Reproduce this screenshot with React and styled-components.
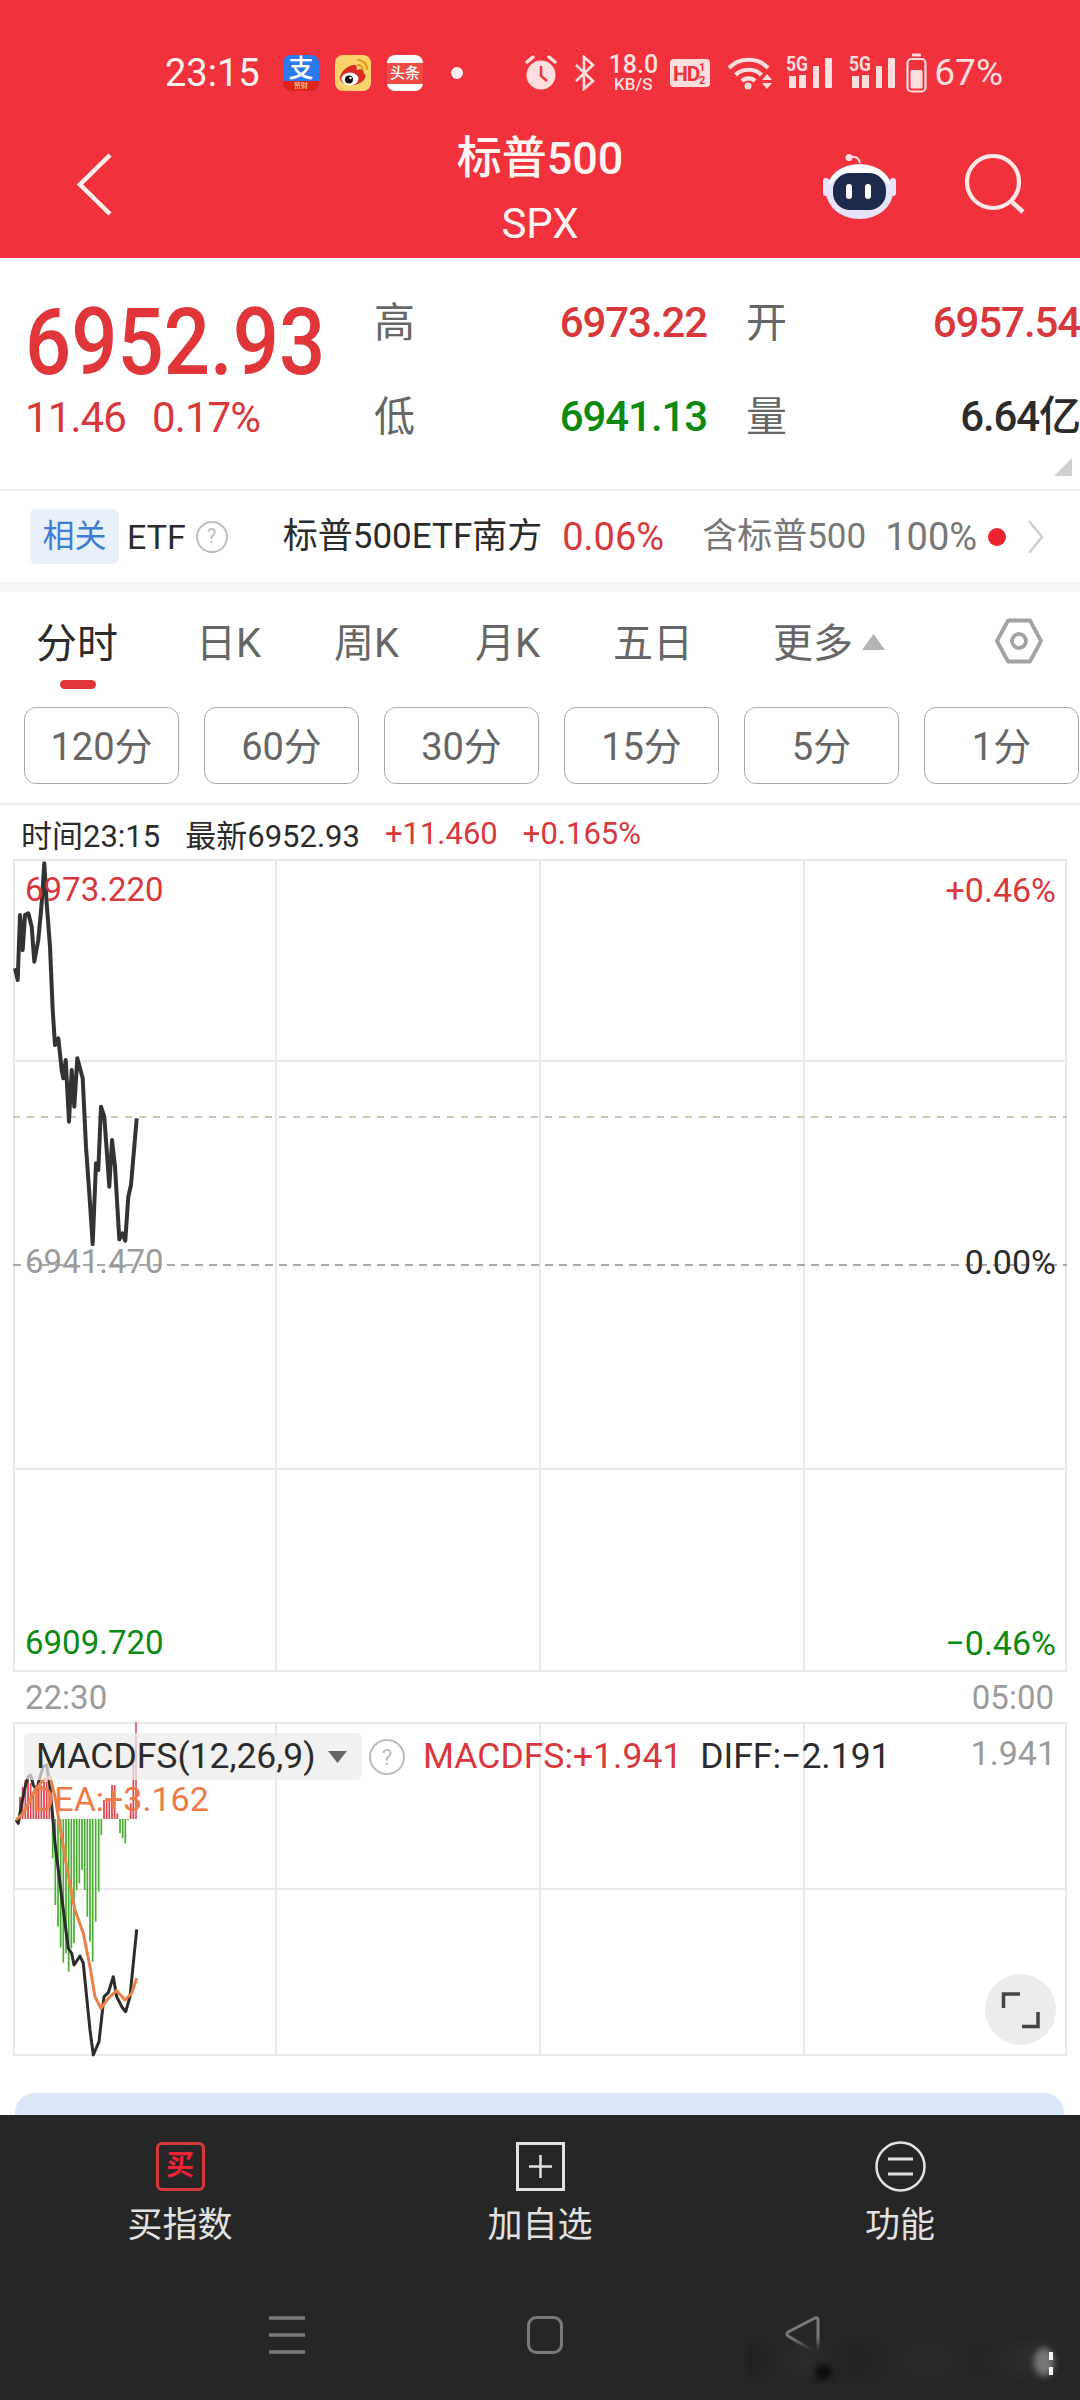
import React from "react";
import styled, { createGlobalStyle } from "styled-components";

const RED = "#d8373c";
const GREEN = "#0b8a12";
const DARK = "#2b2b2b";
const GRAY = "#666666";
const MUTED = "#9b9b9b";
const PALE = "#fddede";
const LINE = "#e9e9e9";

const Global = createGlobalStyle`
  html, body { margin: 0; padding: 0; background: #fff; }
  body { font-family: Roboto, "Noto Sans CJK SC", sans-serif; }
  * { box-sizing: border-box; }
`;

const Page = styled.div`
  width: 1080px; height: 2400px; overflow: hidden;
  display: flex; flex-direction: column; background: #fff;
`;
const Header = styled.header`
  height: 258px; flex: none; background: #f1323c; display: flex; flex-direction: column;
`;
const StatusBar = styled.div`
  height: 132px; padding: 53px 77px 0 165px; display: flex; align-items: flex-start;
`;
const StatusRow = styled.div`
  height: 40px; width: 100%; display: flex; align-items: center;
`;
const Clock = styled.span`
  font-size: 38px; line-height: 40px; color: #fff3f0; width: 118px; flex: none;
`;
const AppIcon = styled.span`
  width: 36px; height: 36px; border-radius: 8px; flex: none; margin-right: 16px;
  position: relative; overflow: hidden; display: flex; align-items: center; justify-content: center;
  background: ${p => p.$bg};
`;
const AlipayGlyph = styled.span`
  color: #fff; font-size: 25px; line-height: 26px; margin-top: -8px; font-weight: 500;
`;
const AlipayBand = styled.span`
  position: absolute; left: 0; right: 0; bottom: 0; height: 10px; background: #e2231a;
  color: #ffe9b0; font-size: 7px; line-height: 10px; text-align: center;
`;
const ToutiaoBand = styled.span`
  width: 100%; height: 21px; background: #ef4b43; color: #fff; font-size: 15px; line-height: 21px;
  text-align: center; font-weight: 500; letter-spacing: 0; white-space: nowrap;
`;
const NoticeDot = styled.span`
  width: 12px; height: 12px; border-radius: 50%; background: #fff0ee; margin-left: 12px; flex: none;
`;
const StatusRight = styled.div`
  margin-left: auto; display: flex; align-items: center; height: 40px;
`;
const Slot = styled.span`
  display: flex; flex: none; margin-left: ${p => p.$ml || 0}px;
`;
const Speed = styled.span`
  display: flex; flex-direction: column; align-items: center; width: 46px; color: ${PALE}; margin-left: 15px; font-weight: 500;
`;
const SpeedValue = styled.span`font-size: 25px; line-height: 22px;`;
const SpeedUnit = styled.span`font-size: 17px; line-height: 17px;`;
const Battery = styled.span`
  font-size: 37px; line-height: 40px; color: ${PALE}; margin-left: 7px;
`;
const NavBar = styled.div`
  flex: 1; display: grid; grid-template-columns: 353px 220px 1fr; padding: 0 55px 0 77px; align-items: start;
`;
const TitleBlock = styled.div`
  display: flex; flex-direction: column; align-items: center; color: #fff5f2;
`;
const Title = styled.div`font-size: 45px; line-height: 54px; font-weight: 500;`;
const Subtitle = styled.div`font-size: 42px; line-height: 48px; margin-top: 14px;`;
const BackSlot = styled.div`padding-top: 21px; display: flex;`;
const NavRight = styled.div`display: flex; justify-content: flex-end; gap: 69px; padding-top: 22px; align-items: flex-start;`;

const Quote = styled.section`
  position: relative; flex: none; height: 233px; display: flex; border-bottom: 2px solid #efefef;
`;
const PriceCol = styled.div`
  width: 374px; padding: 0 0 0 25px; flex: none;
`;
const BigPrice = styled.div`
  font-size: 92px; line-height: 92px; margin-top: 39px; color: #e0363a; font-weight: 500;
  transform: scaleX(.885); transform-origin: left center; white-space: nowrap;
`;
const PriceDelta = styled.div`
  display: flex; gap: 26px; margin-top: 4px; color: ${RED}; font-size: 42px; line-height: 50px; letter-spacing: -.9px;
`;
const Stats = styled.div`
  flex: 1; display: grid; grid-template-columns: 60px 273px 39px 60px 274px; grid-auto-rows: 94px; padding-top: 18px;
`;
const StatLabel = styled.div`
  font-size: 41px; line-height: 94px; color: ${GRAY};
`;
const StatValue = styled.div`
  font-size: 42px; line-height: 94px; text-align: right; letter-spacing: -1.1px; color: ${p => p.$c}; white-space: nowrap;
  font-weight: 500;
`;
const StatGap = styled.div``;
const CornerMark = styled.span`
  position: absolute; right: 8px; bottom: 13px; width: 18px; height: 18px; background: #cfcfcf;
  clip-path: polygon(100% 0, 100% 100%, 0 100%);
`;

const EtfRow = styled.section`
  flex: none; height: 91px; display: flex; align-items: center; padding-left: 30px; white-space: nowrap;
`;
const EtfBadge = styled.span`
  width: 89px; height: 55px; border-radius: 6px; background: #e8f0fb; color: #3e7dd4; font-size: 32px; line-height: 55px; text-align: center; flex: none;
`;
const EtfText = styled.span`
  color: ${p => p.$c || DARK}; margin-left: ${p => p.$ml}px; flex: none; line-height: 40px;
  font-size: ${p => p.$size || 34}px;
`;
const Help = styled.span`
  width: ${p => p.$s}px; height: ${p => p.$s}px; border-radius: 50%; border: 2px solid #bdbdbd; color: #bdbdbd;
  font-size: ${p => p.$s * .62}px; line-height: ${p => p.$s - 4}px; text-align: center; flex: none; margin-left: ${p => p.$ml}px;
`;
const RedDot = styled.span`
  width: 18px; height: 18px; border-radius: 50%; background: #ec2330; margin-left: 11px; flex: none;
`;
const Band = styled.div`height: 10px; flex: none; background: #f5f5f5;`;

const Tabs = styled.nav`
  flex: none; height: 115px; padding: 27px 0 0 36px; display: grid; grid-template-columns: 160px 138px 141px 138px 160px 222px 48px; align-items: start;
`;
const Tab = styled.div`
  display: flex; flex-direction: column; align-items: flex-start;
`;
const TabLabel = styled.div`
  font-size: ${p => p.$on ? 41 : 40}px; line-height: 50px; color: ${p => p.$on ? DARK : GRAY}; display: flex; align-items: center; gap: 9px;
`;
const TabBar = styled.span`
  width: 36px; height: 9px; border-radius: 5px; background: #e0363a; margin: 11px 0 0 24px;
`;
const TabCaret = styled.span`
  width: 23px; height: 16px; background: #b4b4b4; clip-path: polygon(50% 0, 100% 100%, 0 100%); margin-top: -4px;
`;
const HexSlot = styled.div`display: flex; margin-top: -1px;`;
const PeriodRow = styled.div`
  flex: none; display: flex; gap: 25px; padding-left: 24px; height: 77px;
`;
const Period = styled.div`
  flex: none; width: 155px; height: 77px; border: 1px solid #a9a9a9; border-radius: 12px; color: ${GRAY};
  font-size: 38px; line-height: 78px; text-align: center;
`;
const InfoLine = styled.div`
  flex: none; margin-top: 19px; height: 56px; border-top: 2px solid #efefef; padding: 2px 0 0 21px;
  display: flex; gap: 25px; align-items: center; font-size: 31px; white-space: nowrap;
`;
const InfoItem = styled.span`color: ${p => p.$c || DARK};`;

const Chart = styled.div`
  position: relative; flex: none; margin: 0 13px; height: ${p => p.$h}px;
  svg { display: block; overflow: visible; }
`;
const ChartLabel = styled.span`
  position: absolute; top: ${p => p.$top}px; ${p => p.$right ? "right: 11px; font-size: 34px;" : "left: 12px; font-size: 33px;"}
  color: ${p => p.$c}; line-height: 38px; white-space: nowrap;
`;
const AxisRow = styled.div`
  flex: none; height: 50px; padding: 7px 26px 0 25px; display: flex; justify-content: space-between;
  color: ${MUTED}; font-size: 33px; line-height: 38px;
`;
const Legend = styled.div`
  position: absolute; left: 11px; top: 11px; display: flex; align-items: center; font-size: 35.500px; line-height: 47px; white-space: nowrap;
`;
const LegendBox = styled.div`
  width: 338px; height: 47px; border-radius: 6px; background: rgba(236,236,236,.72); color: ${DARK};
  padding-left: 12px; display: flex; align-items: center; position: relative;
`;
const LegendCaret = styled.span`
  position: absolute; left: 304px; top: 18px; width: 19px; height: 12px; background: #666;
  clip-path: polygon(0 0, 100% 0, 50% 100%);
`;
const LegendValue = styled.span`color: ${p => p.$c}; margin-left: ${p => p.$ml}px;`;
const DeaLabel = styled.span`
  position: absolute; left: 19px; top: 58px; color: #ee7b47; font-size: 34px; line-height: 38px;
`;
const ExpandButton = styled.div`
  position: absolute; right: 11px; bottom: 11px; width: 71px; height: 71px; border-radius: 50%; background: #ececec;
  display: flex; align-items: center; justify-content: center;
`;
const Promo = styled.div`
  flex: none; margin: 37px 16px 0 15px; height: 40px; background: #d9e7f9; border-radius: 20px 20px 0 0;
`;
const Main = styled.main`
  flex: 1; min-height: 0; overflow: hidden; display: flex; flex-direction: column;
`;
const BottomBar = styled.footer`
  position: relative; flex: none; height: 285px; background: #262626; display: flex; flex-direction: column;
`;
const Actions = styled.div`
  flex: none; height: 201px; display: grid; grid-template-columns: repeat(3, 360px); padding-top: 25px;
`;
const Action = styled.div`
  display: flex; flex-direction: column; align-items: center; color: #e2e2e2; font-size: 35px; line-height: 42px;
`;
const ActionIcon = styled.span`
  height: 52px; margin-bottom: 13px; display: flex; align-items: center; justify-content: center;
`;
const BuyIcon = styled.span`
  width: 49px; height: 49px; border: 3px solid #d8373c; border-radius: 6px; color: #ee2335; font-size: 28px; line-height: 42px; text-align: center; font-weight: 700;
`;
const SystemNav = styled.div`
  flex: none; display: grid; grid-template-columns: repeat(3, 258px); padding-left: 158px; justify-items: center;
`;
const Smudge = styled.div`
  position: absolute; left: 748px; top: 229px; width: 300px; height: 32px;
  background: linear-gradient(90deg, #1f1f1f 0%, #2b2b2b 18%, #212121 36%, #2a2a2a 60%, #242424 78%, #303030 100%);
  filter: blur(4px);
`;
const SmudgeSpot = styled.div`
  position: absolute; left: 815px; top: 250px; width: 17px; height: 15px; border-radius: 50%; background: #0b0b0b; filter: blur(3px);
`;
const SmudgeGlow = styled.div`
  position: absolute; left: 1034px; top: 233px; width: 20px; height: 28px; border-radius: 50%; background: #777; filter: blur(3px);
`;
const SmudgeEdge = styled.div`
  position: absolute; left: 1048px; top: 237px; width: 5px; height: 23px; border-right: 4px dashed #f4f4f4;
`;

const P = (arr, x0, y0) => arr.map(([x, y]) => `${(x0 + x / 3).toFixed(1)},${(y0 + y / 3).toFixed(1)}`).join(" ");

const mainLine = [[45,445],[53,480],[60,285],[68,390],[75,285],[85,280],[95,320],[103,425],[115,360],[125,250],[133,130],[140,250],[150,380],[158,570],[165,675],[175,655],[185,750],[190,775],[197,720],[207,905],[215,750],[223,860],[232,715],[248,775],[258,980],[268,1120],[278,1272],[288,1030],[295,1050],[303,860],[313,890],[328,1100],[336,960],[345,1040],[358,1258],[367,1240],[376,1262],[385,1130],[393,1095],[410,895]];
const macdBlack = [[48,450],[55,460],[65,400],[78,340],[85,320],[92,315],[100,345],[110,360],[120,320],[130,290],[140,285],[150,350],[158,440],[165,520],[180,640],[195,760],[205,835],[215,850],[222,885],[240,858],[250,880],[262,1000],[270,1080],[280,1155],[297,1115],[312,980],[325,968],[340,920],[350,980],[365,1010],[377,1025],[390,980],[400,880],[410,778]];
const macdOrange = [[48,450],[70,430],[90,390],[105,360],[130,330],[150,320],[165,380],[180,470],[200,590],[225,720],[250,790],[270,890],[285,980],[303,1015],[325,985],[350,962],[375,990],[395,970],[410,925]];
const greenBars = [[158,565],[166,705],[174,770],[182,832],[190,878],[198,850],[206,905],[214,835],[222,820],[230,660],[238,640],[246,600],[254,660],[262,740],[270,815],[278,875],[287,755],[296,665],[304,495],[360,490],[368,505],[376,520],[384,450]];
const redBars = [[60,380],[68,350],[76,330],[84,330],[92,340],[100,375],[108,390],[116,345],[124,345],[132,335],[140,335],[148,335],[156,405],[312,390],[320,385],[328,390],[336,345],[344,345],[352,430],[392,400],[400,270]];

const VGRID = [276, 540, 804];

const MainChart = () => (
  <svg width="1054" height="813" viewBox="13 859 1054 813">
    <g stroke={LINE} strokeWidth="2" fill="none">
      <rect x="14" y="860" width="1052" height="811" />
      {VGRID.map(x => <line key={x} x1={x} x2={x} y1="859" y2="1672" />)}
      <line x1="13" x2="1067" y1="1061" y2="1061" />
      <line x1="13" x2="1067" y1="1469" y2="1469" />
    </g>
    <line x1="13" x2="1067" y1="1117" y2="1117" stroke="#c9b48f" strokeWidth="1.500" strokeDasharray="7 7" />
    <line x1="13" x2="1067" y1="1265" y2="1265" stroke="#a9a9a9" strokeWidth="2" strokeDasharray="8 6" />
    <polyline points={P(mainLine, 0, 820)} fill="none" stroke="#333" strokeWidth="4" strokeLinejoin="round" />
  </svg>
);

const MacdChart = () => (
  <svg width="1054" height="334" viewBox="13 1722 1054 334">
    <g stroke={LINE} strokeWidth="2" fill="none">
      <rect x="14" y="1723" width="1052" height="332" />
      {VGRID.map(x => <line key={x} x1={x} x2={x} y1="1722" y2="2056" />)}
      <line x1="13" x2="1067" y1="1889" y2="1889" />
    </g>
    <g stroke="#dc4a56" strokeWidth="1.800">
      {redBars.map(([x, y]) => <line key={x} x1={x / 3} x2={x / 3} y1={1670 + y / 3} y2="1819" />)}
    </g>
    <g stroke="#48ad30" strokeWidth="1.700">
      {greenBars.map(([x, y]) => <line key={x} x1={x / 3} x2={x / 3} y1="1819" y2={1670 + y / 3} />)}
    </g>
    <line x1="136" x2="136" y1="1722" y2="1819" stroke="#d9737b" strokeWidth="2" />
    <polyline points={P(macdBlack, 0, 1670)} fill="none" stroke="#2c2c2c" strokeWidth="3" strokeLinejoin="round" />
    <polyline points={P(macdOrange, 0, 1670)} fill="none" stroke="#e8824a" strokeWidth="3" strokeLinejoin="round" />
  </svg>
);

const WeiboIcon = () => (
  <svg width="36" height="36" viewBox="0 0 36 36">
    <path d="M5 23c0-6 8-13 14-13 3 0 3 2 2.500 5 4-1.500 8-1 7 3 2 1 3 3 1 6-3 4-8 6-13 6-6 0-11.500-2.500-11.500-7z" fill="#d92c24" />
    <ellipse cx="15" cy="24" rx="8.500" ry="6.500" fill="#fff" />
    <circle cx="14" cy="24.500" r="4" fill="#111" />
    <circle cx="15.500" cy="23" r="1.200" fill="#fff" />
    <path d="M23 5c5 0 9 4 9 9M23 10c2.500 0 4.500 2 4.500 4.500" fill="none" stroke="#e49a18" strokeWidth="2.200" strokeLinecap="round" />
  </svg>
);

const Alarm = () => (
  <svg width="32" height="36" viewBox="0 0 32 36">
    <circle cx="16" cy="20" r="14.500" fill={PALE} />
    <path d="M16 11v10l6 5" fill="none" stroke="#f1323c" strokeWidth="2.500" />
    <path d="M2 7l6-5M30 7l-6-5" stroke={PALE} strokeWidth="3.500" strokeLinecap="round" />
  </svg>
);
const BluetoothIcon = () => (
  <svg width="21" height="36" viewBox="0 0 21 36">
    <path d="M2 10l17 16-9 8V2l9 8L2 26" fill="none" stroke={PALE} strokeWidth="2.600" />
  </svg>
);
const HdIcon = () => (
  <svg width="40" height="28" viewBox="0 0 40 28">
    <rect width="40" height="28" rx="4" fill={PALE} />
    <text x="3" y="22" fontFamily="Roboto, sans-serif" fontWeight="700" fontSize="21" letterSpacing="-1" fill="#f1323c">HD</text>
    <text x="29" y="12" fontFamily="Roboto, sans-serif" fontWeight="700" fontSize="11" fill="#f1323c">1</text>
    <text x="29" y="25" fontFamily="Roboto, sans-serif" fontWeight="700" fontSize="11" fill="#f1323c">2</text>
  </svg>
);
const WifiIcon = () => (
  <svg width="45" height="34" viewBox="0 0 45 34">
    <path d="M1 12C11 1 30 1 40 12M7.500 19C14 12 27 12 33.500 19M14 25c3.500-3.500 9.500-3.500 13 0" fill="none" stroke={PALE} strokeWidth="4.200" />
    <circle cx="20" cy="30" r="3.500" fill={PALE} />
    <path d="M39 18l5 6H34zM39 33l5-6H34z" fill={PALE} />
  </svg>
);
const SignalIcon = () => (
  <svg width="46" height="42" viewBox="0 -4 46 42">
    <text x="0" y="15" fontFamily="Roboto, sans-serif" fontWeight="700" fontSize="21" textLength="22" lengthAdjust="spacingAndGlyphs" fill={PALE}>5G</text>
    <g fill={PALE}>
      <rect x="3" y="20" width="7" height="12" />
      <rect x="13" y="19" width="7" height="13" />
      <rect x="27" y="10" width="6" height="22" rx="1" />
      <rect x="39" y="2" width="7" height="30" rx="1" />
    </g>
  </svg>
);
const BatteryIcon = () => (
  <svg width="21" height="40" viewBox="0 0 21 40">
    <rect x="1.500" y="6" width="18" height="32.500" rx="4" fill="none" stroke={PALE} strokeWidth="2.200" />
    <rect x="6" y="0.500" width="9" height="3" rx="1" fill={PALE} />
    <rect x="4.500" y="17" width="12" height="18.500" rx="1.500" fill={PALE} />
  </svg>
);
const BackIcon = () => (
  <svg width="35" height="63" viewBox="0 0 35 63">
    <path d="M33 2L3 31.500 33 61" fill="none" stroke="#fff0ee" strokeWidth="4.500" />
  </svg>
);
const RobotIcon = () => (
  <svg width="73" height="66" viewBox="0 0 73 66">
    <circle cx="26" cy="3.500" r="3.500" fill="#f3dfe6" />
    <path d="M27 3c5-1 9 1 10 6" fill="none" stroke="#f3dfe6" strokeWidth="2.200" />
    <rect x="0" y="24" width="6" height="18" rx="3" fill="#e8e3f7" />
    <rect x="67" y="24" width="6" height="18" rx="3" fill="#e8e3f7" />
    <ellipse cx="36.500" cy="37.500" rx="33.500" ry="27.500" fill="#e6e4fa" />
    <path d="M5 32C9 17 22 11 36.500 11S64 17 68 32C60 19 13 19 5 32z" fill="#ffffff" />
    <rect x="10" y="19" width="53" height="37" rx="17" fill="#1d2a4b" />
    <rect x="23" y="30" width="6" height="15" rx="3" fill="#fff" />
    <rect x="42" y="30" width="6" height="15" rx="3" fill="#fff" />
  </svg>
);
const SearchIcon = () => (
  <svg width="60" height="60" viewBox="0 0 60 60">
    <circle cx="28" cy="28" r="26" fill="none" stroke="#ffe9e6" strokeWidth="4.200" />
    <path d="M47 48l11 10" fill="none" stroke="#ffe9e6" strokeWidth="4.500" />
  </svg>
);
const Chevron = () => (
  <svg width="17" height="34" viewBox="0 0 17 34" style={{ marginLeft: 21, flex: "none" }}>
    <path d="M2 1l13 16L2 33" fill="none" stroke="#cfcfcf" strokeWidth="2.500" />
  </svg>
);
const HexIcon = () => (
  <svg width="48" height="46" viewBox="0 0 48 46">
    <path d="M13 2.500h22L46 23 35 43.500H13L2 23z" fill="none" stroke="#a3a3a3" strokeWidth="3.800" strokeLinejoin="round" />
    <circle cx="24" cy="23" r="7" fill="none" stroke="#a3a3a3" strokeWidth="3.800" />
  </svg>
);
const ExpandIcon = () => (
  <svg width="38" height="36" viewBox="0 0 38 36">
    <path d="M1.500 16V2H18M36 20v14.500H20" fill="none" stroke="#444" strokeWidth="3.500" />
  </svg>
);
const PlusBox = () => (
  <svg width="49" height="49" viewBox="0 0 49 49">
    <rect x="1.500" y="1.500" width="46" height="46" fill="none" stroke="#e2e2e2" strokeWidth="3" />
    <path d="M24.500 13v23M13 24.500h23" stroke="#e2e2e2" strokeWidth="2.500" />
  </svg>
);
const MenuCircle = () => (
  <svg width="51" height="51" viewBox="0 0 51 51">
    <circle cx="25.500" cy="25.500" r="24" fill="none" stroke="#e2e2e2" strokeWidth="2.500" />
    <path d="M13 18h25M13 33h25" stroke="#e2e2e2" strokeWidth="3" />
  </svg>
);
const NavLines = () => (
  <svg width="36" height="38" viewBox="0 0 36 38">
    <path d="M0 2h36M0 19h36M0 36h36" stroke="#7a7a7a" strokeWidth="3.500" />
  </svg>
);
const NavHome = () => (
  <svg width="36" height="38" viewBox="0 0 36 38">
    <rect x="1.500" y="1.500" width="33" height="35" rx="8" fill="none" stroke="#7a7a7a" strokeWidth="3" />
  </svg>
);
const NavBack = () => (
  <svg width="36" height="38" viewBox="0 0 36 38">
    <path d="M33 4q0-3-3-2L3 16q-2 2 0 4l30 18z" fill="none" stroke="#7a7a7a" strokeWidth="3" strokeLinejoin="round" />
  </svg>
);

const periods = ["120分", "60分", "30分", "15分", "5分", "1分"];
const tabs = ["日K", "周K", "月K", "五日"];

export default function App() {
  return (
    <Page>
      <Global />
      <Main>
        <Header>
          <StatusBar>
            <StatusRow>
              <Clock>23:15</Clock>
              <AppIcon $bg="#2b7bee">
                <AlipayGlyph>支</AlipayGlyph>
                <AlipayBand>赞财</AlipayBand>
              </AppIcon>
              <AppIcon $bg="#fbd36b"><WeiboIcon /></AppIcon>
              <AppIcon $bg="#ffffff"><ToutiaoBand>头条</ToutiaoBand></AppIcon>
              <NoticeDot />
              <StatusRight>
                <Slot><Alarm /></Slot>
                <Slot $ml={17}><BluetoothIcon /></Slot>
                <Speed><SpeedValue>18.0</SpeedValue><SpeedUnit>KB/S</SpeedUnit></Speed>
                <Slot $ml={14}><HdIcon /></Slot>
                <Slot $ml={18}><WifiIcon /></Slot>
                <Slot $ml={13}><SignalIcon /></Slot>
                <Slot $ml={17}><SignalIcon /></Slot>
                <Slot $ml={11}><BatteryIcon /></Slot>
                <Battery>67%</Battery>
              </StatusRight>
            </StatusRow>
          </StatusBar>
          <NavBar>
            <BackSlot><BackIcon /></BackSlot>
            <TitleBlock>
              <Title>标普500</Title>
              <Subtitle>SPX</Subtitle>
            </TitleBlock>
            <NavRight><RobotIcon /><SearchIcon /></NavRight>
          </NavBar>
        </Header>

        <Quote>
          <PriceCol>
            <BigPrice>6952.93</BigPrice>
            <PriceDelta><span>11.46</span><span>0.17%</span></PriceDelta>
          </PriceCol>
          <Stats>
            <StatLabel>高</StatLabel>
            <StatValue $c={RED}>6973.22</StatValue>
            <StatGap />
            <StatLabel>开</StatLabel>
            <StatValue $c={RED}>6957.54</StatValue>
            <StatLabel>低</StatLabel>
            <StatValue $c={GREEN}>6941.13</StatValue>
            <StatGap />
            <StatLabel>量</StatLabel>
            <StatValue $c={DARK}>6.64亿</StatValue>
          </Stats>
          <CornerMark />
        </Quote>

        <EtfRow>
          <EtfBadge>相关</EtfBadge>
          <EtfText $ml={8}>ETF</EtfText>
          <Help $s={32} $ml={10}>?</Help>
          <EtfText $ml={55} $size={35}>标普500ETF南方</EtfText>
          <EtfText $ml={20} $c={RED} $size={38}>0.06%</EtfText>
          <EtfText $ml={38} $c="#777" $size={35}>含标普500</EtfText>
          <EtfText $ml={19} $c="#777" $size={38}>100%</EtfText>
          <RedDot />
          <Chevron />
        </EtfRow>
        <Band />

        <Tabs>
          <Tab>
            <TabLabel $on>分时</TabLabel>
            <TabBar />
          </Tab>
          {tabs.map(t => <Tab key={t}><TabLabel>{t}</TabLabel></Tab>)}
          <Tab><TabLabel>更多<TabCaret /></TabLabel></Tab>
          <HexSlot><HexIcon /></HexSlot>
        </Tabs>
        <PeriodRow>
          {periods.map(p => <Period key={p}>{p}</Period>)}
        </PeriodRow>
        <InfoLine>
          <InfoItem>时间23:15</InfoItem>
          <InfoItem>最新6952.93</InfoItem>
          <InfoItem $c={RED}>+11.460</InfoItem>
          <InfoItem $c={RED}>+0.165%</InfoItem>
        </InfoLine>

        <Chart $h={813}>
          <MainChart />
          <ChartLabel $top={12} $c={RED}>6973.220</ChartLabel>
          <ChartLabel $top={12} $right $c={RED}>+0.46%</ChartLabel>
          <ChartLabel $top={384} $c={MUTED}>6941.470</ChartLabel>
          <ChartLabel $top={384} $right $c={DARK}>0.00%</ChartLabel>
          <ChartLabel $top={765} $c={GREEN}>6909.720</ChartLabel>
          <ChartLabel $top={765} $right $c={GREEN}>−0.46%</ChartLabel>
        </Chart>
        <AxisRow><span>22:30</span><span>05:00</span></AxisRow>
        <Chart $h={334}>
          <MacdChart />
          <Legend>
            <LegendBox>MACDFS(12,26,9)<LegendCaret /></LegendBox>
            <Help $s={36} $ml={7}>?</Help>
            <LegendValue $c={RED} $ml={18}>MACDFS:+1.941</LegendValue>
            <LegendValue $c={DARK} $ml={18}>DIFF:−2.191</LegendValue>
          </Legend>
          <DeaLabel>DEA:+3.162</DeaLabel>
          <ChartLabel $top={12} $right $c={MUTED}>1.941</ChartLabel>
          <ExpandButton><ExpandIcon /></ExpandButton>
        </Chart>
        <Promo />
      </Main>

      <BottomBar>
        <Actions>
          <Action>
            <ActionIcon><BuyIcon>买</BuyIcon></ActionIcon>
            买指数
          </Action>
          <Action>
            <ActionIcon><PlusBox /></ActionIcon>
            加自选
          </Action>
          <Action>
            <ActionIcon><MenuCircle /></ActionIcon>
            功能
          </Action>
        </Actions>
        <SystemNav>
          <NavLines />
          <NavHome />
          <NavBack />
        </SystemNav>
        <Smudge />
        <SmudgeSpot />
        <SmudgeGlow />
        <SmudgeEdge />
      </BottomBar>
    </Page>
  );
}
